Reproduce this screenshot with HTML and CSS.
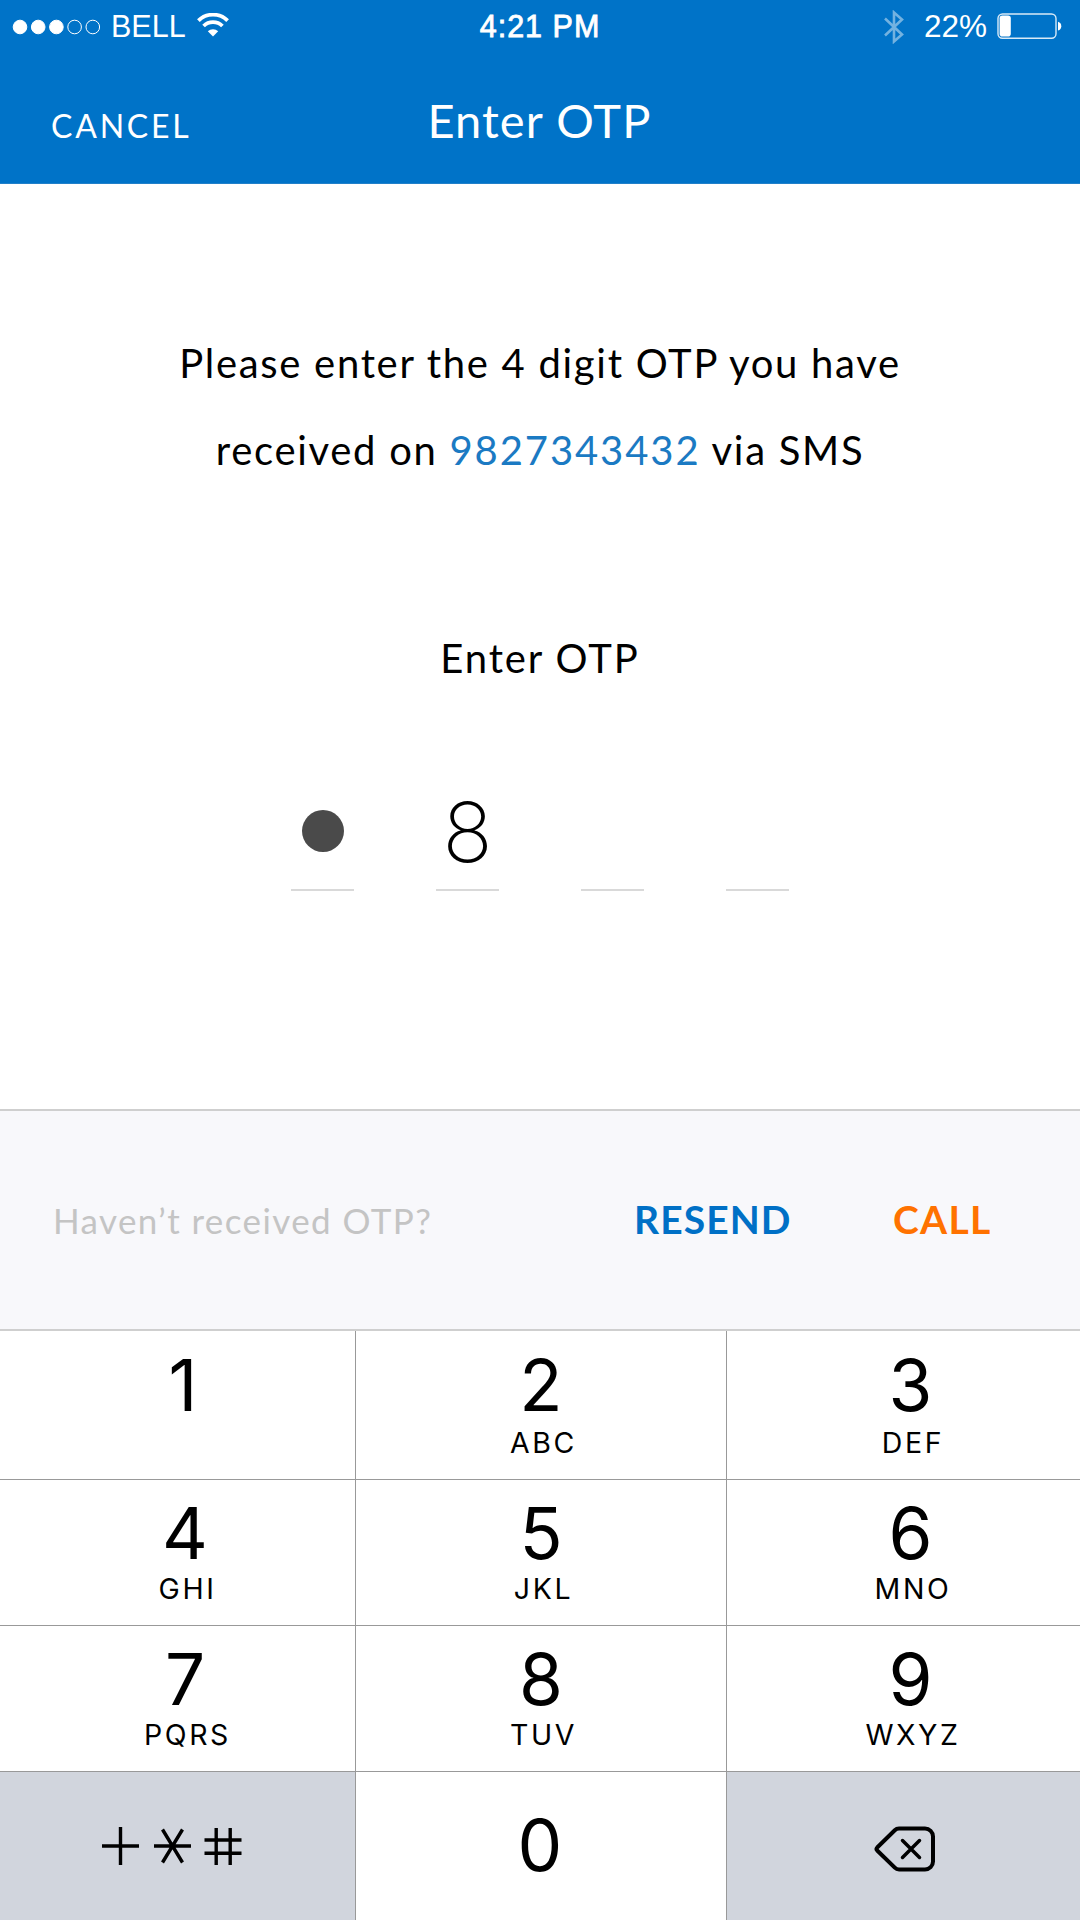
FILE: index.html
```html
<!DOCTYPE html>
<html lang="en">
<head>
<meta charset="utf-8">
<title>Enter OTP</title>
<link rel="stylesheet" href="styles.css">
</head>
<body>
<div class="screen">
  <header class="header">
    <div class="status">
      <div class="status-left">
        <svg class="signal" width="90" height="18" viewBox="0 0 90 18" fill="#fff" stroke="#fff">
          <circle cx="8" cy="9" r="6.8"/><circle cx="26.200" cy="9" r="6.8"/><circle cx="44.400" cy="9" r="6.8"/>
          <circle cx="62.600" cy="9" r="6.8" fill="none"/><circle cx="80.800" cy="9" r="6.8" fill="none"/>
        </svg>
        <span class="carrier">BELL</span>
        <svg class="wifi" width="32" height="24" viewBox="0 0 32 24" fill="none" stroke="#fff" stroke-width="3.8">
          <path d="M1.400 7.600a20.800 20.800 0 0 1 29.200 0"/>
          <path d="M6.600 13a13.400 13.400 0 0 1 18.800 0"/>
          <path d="M16 23.600l-5.200-5.300a7.500 7.500 0 0 1 10.400 0z" fill="#fff" stroke="none"/>
        </svg>
      </div>
      <span class="clock">4:21 PM</span>
      <div class="status-right">
        <svg class="bluetooth" width="20" height="34" viewBox="0 0 20 34" fill="none" stroke="#fff" stroke-width="2.6">
          <path d="M1 8.500l17 16-8 7V2.500l8 7-17 16"/>
        </svg>
        <span class="percent">22%</span>
        <svg class="battery" width="65" height="26" viewBox="0 0 65 26" fill="none" stroke="#fff">
          <rect x="1" y="1" width="58" height="24.300" rx="4.500" stroke-width="1.400" stroke-opacity=".85"/>
          <rect x="2.600" y="2.600" width="11.200" height="21" rx="2.800" fill="#fff" stroke="none"/>
          <path d="M61 8.800a4.600 4.600 0 0 1 0 8.800z" fill="#fff" stroke="none"/>
        </svg>
      </div>
    </div>
    <nav class="nav">
      <a class="cancel">CANCEL</a>
      <h1 class="title">Enter OTP</h1>
    </nav>
  </header>

  <main class="content">
    <p class="message"><span class="line line-one">Please enter the 4 digit OTP you have</span><span class="line line-two">received on <span class="phone">9827343432</span> via SMS</span></p>
    <h2 class="label">Enter OTP</h2>
    <div class="otp">
      <div class="slot"><span class="mask"></span></div>
      <div class="slot">8</div>
      <div class="slot"></div>
      <div class="slot"></div>
    </div>
  </main>

  <section class="help">
    <span class="question">Haven’t received OTP?</span>
    <a class="resend">RESEND</a>
    <a class="call">CALL</a>
  </section>

  <section class="keypad">
    <div class="key left"><span class="digit one">1</span></div>
    <div class="key"><span class="digit">2</span><span class="letters">ABC</span></div>
    <div class="key right"><span class="digit">3</span><span class="letters">DEF</span></div>
    <div class="key left"><span class="digit">4</span><span class="letters">GHI</span></div>
    <div class="key"><span class="digit">5</span><span class="letters">JKL</span></div>
    <div class="key right"><span class="digit">6</span><span class="letters">MNO</span></div>
    <div class="key left"><span class="digit">7</span><span class="letters">PQRS</span></div>
    <div class="key"><span class="digit">8</span><span class="letters">TUV</span></div>
    <div class="key right"><span class="digit">9</span><span class="letters">WXYZ</span></div>
    <div class="key symbols">
      <svg width="140" height="38" viewBox="0 0 140 38" fill="none" stroke="#000" stroke-width="3.400">
        <path d="M0 19h37M18.500 0v38M52 19h37M60.500 2.500l20 33M80.500 2.500l-20 33M102.500 13h37M102.500 26.300h37M114.200 1v38M128.200 1v38"/>
      </svg>
    </div>
    <div class="key zero"><span class="digit">0</span></div>
    <div class="key erase">
      <svg width="62" height="46" viewBox="0 0 62 46" fill="none" stroke="#000" stroke-width="4" stroke-linejoin="round" stroke-linecap="round">
        <path d="M25 2.500h26a8 8 0 0 1 8 8v25a8 8 0 0 1-8 8H25a6 6 0 0 1-4.200-1.800L3.200 24.500a2.200 2.200 0 0 1 0-3L20.800 4.300A6 6 0 0 1 25 2.500z"/>
        <path d="M28.500 14.500l17 17M45.500 14.500l-17 17" stroke-width="3.500"/>
      </svg>
    </div>
  </section>
</div>
</body>
</html>
```
FILE: styles.css
```css
* { box-sizing: border-box; }
body { margin: 0; background: #fff; }
.screen {
  width: 1080px;
  height: 1920px;
  display: flex;
  flex-direction: column;
  overflow: hidden;
  color: #000;
  font-family: Lato, sans-serif;
}
h1, h2, p { margin: 0; font-weight: 400; }
svg { display: block; flex: none; }

.header { height: 184px; background: #0073c8; color: #fff; border-bottom: 1px solid #2180c9; }
.status {
  height: 53px;
  display: grid;
  grid-template-columns: 1fr auto 1fr;
  align-items: center;
  font: 30.5px/53px "Liberation Sans", Arial, sans-serif;
}
.status-left { display: flex; align-items: center; padding-left: 12px; }
.carrier { margin-left: 9px; }
.wifi { margin: -3px 0 0 11px; }
.clock { letter-spacing: 1px; -webkit-text-stroke: .8px #fff; }
.status-right { display: flex; align-items: center; justify-content: flex-end; padding-right: 18px; }
.bluetooth { opacity: .45; }
.percent { margin: 0 10px 0 20px; font-size: 31.5px; }
.battery { margin-top: -1px; }
.nav {
  display: grid;
  grid-template-columns: 1fr auto 1fr;
  align-items: baseline;
  padding: 37px 52px 0 51px;
}
.cancel { font-size: 32px; letter-spacing: 2.8px; }
.title { font-size: 47px; line-height: 60px; letter-spacing: 1.1px; }

.content { height: 925px; display: flex; flex-direction: column; align-items: center; }
.message { margin-top: 136px; font-size: 40px; line-height: 87px; letter-spacing: 1.7px; text-align: center; }
.line { display: block; white-space: nowrap; }
.phone { color: #1b7ac3; letter-spacing: 1.9px; }
.label { margin-top: 134px; font-size: 40px; line-height: 60px; letter-spacing: 1.900px; }
.otp { margin-top: 99px; display: flex; gap: 82px; }
.slot {
  width: 63px;
  height: 104px;
  border-bottom: 2px solid #d9d9d9;
  display: flex;
  justify-content: center;
  font: 230 83px/91px Inter, sans-serif;
}
.mask { width: 42px; height: 42px; margin-top: 23px; border-radius: 50%; background: #4a4a4a; }

.help {
  height: 222px;
  display: flex;
  align-items: baseline;
  padding: 85px 52px 0 53px;
  border-top: 2px solid #cfcfcf;
  border-bottom: 2px solid #cfcfcf;
  background: #f8f8fb;
}
.question { width: 581px; color: #c4c4c4; font-size: 35px; letter-spacing: 1.4px; }
.resend { width: 259px; color: #0070c6; font-size: 39px; font-weight: 700; letter-spacing: 1.1px; }
.call { color: #ff7200; font-size: 39px; font-weight: 700; letter-spacing: 1.3px; }

.keypad {
  flex: 1;
  display: grid;
  grid-template-columns: 356px 371px 353px;
  grid-template-rows: 149px 146px 146px 1fr;
  font-family: Inter, sans-serif;
}
.key {
  display: flex;
  flex-direction: column;
  align-items: center;
  border-right: 1px solid #999;
  border-bottom: 1px solid #999;
  padding-top: 21px;
}
.key:nth-child(3n) { border-right: 0; }
.key:nth-child(n+4) { padding-top: 20px; }
.key:nth-child(n+10) { border-bottom: 0; }
.left { padding-left: 15px; }
.right { padding-left: 14px; }
.digit { font-size: 71px; line-height: 67px; }
.one { margin-right: 4px; }
.letters {
  margin: 6px -5px 0 0;
  font-size: 28.5px;
  line-height: 36px;
  font-weight: 400;
  letter-spacing: 2.6px;
}
.key:nth-child(n+4) .letters { margin-top: 4px; }
.symbols, .erase { background: #d1d5dd; justify-content: center; }
.key.symbols { padding: 0 11px 0 0; }
.key.erase { padding: 6px 0 0 3px; }
.key.zero { padding: 40px 2px 0 0; }
```
